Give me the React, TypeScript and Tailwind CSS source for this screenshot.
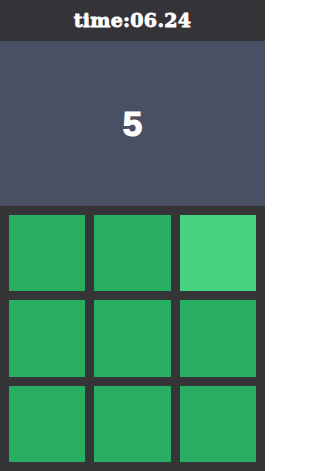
import React from "react";

const tiles = [
  "bg-[#27ae60]", "bg-[#27ae60]", "bg-[#45d37f]",
  "bg-[#27ae60]", "bg-[#27ae60]", "bg-[#27ae60]",
  "bg-[#27ae60]", "bg-[#27ae60]", "bg-[#27ae60]",
];

export default function App() {
  return (
    <div className="w-[265px] h-[471px] flex flex-col bg-[#353437] overflow-hidden">
      <div className="h-[41px] flex items-center justify-center bg-[#333338]">
        <span className="text-white font-bold text-[19px] leading-none tracking-[0.3px] [-webkit-text-stroke:0.8px_white]" style={{ fontFamily: '"DejaVu Serif", serif' }}>
          time:06.24
        </span>
      </div>
      <div className="h-[165px] flex items-center justify-center bg-[#4a5064]">
        <span className="text-white font-bold text-[35px] leading-none [-webkit-text-stroke:1.2px_white]" style={{ fontFamily: '"Liberation Sans", Arial, sans-serif' }}>
          5
        </span>
      </div>
      <div className="grid grid-cols-3 gap-x-[9px] gap-y-[9px] p-[9px] flex-1">
        {tiles.map((c, i) => (
          <div key={i} className={c} />
        ))}
      </div>
    </div>
  );
}
